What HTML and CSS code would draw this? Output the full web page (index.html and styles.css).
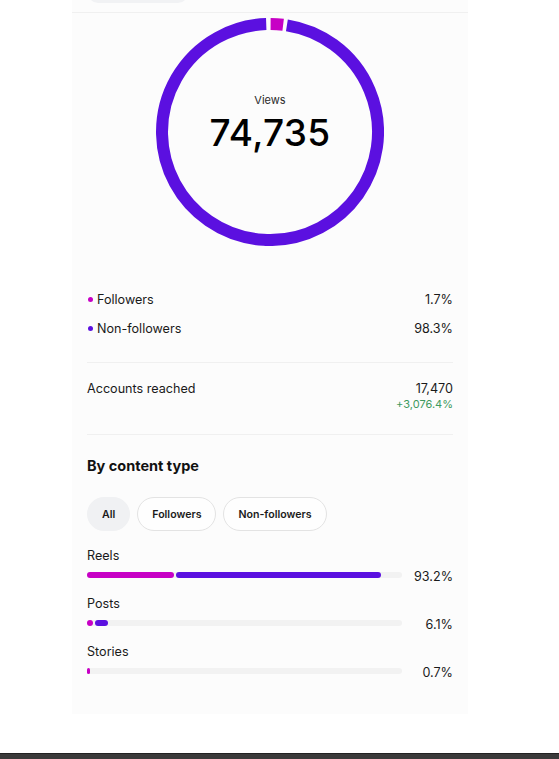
FILE: index.html
```html
<!DOCTYPE html>
<html>
<head>
<meta charset="utf-8">
<link rel="stylesheet" href="styles.css">
</head>
<body>
<div class="page">
  <main class="panel">
    <div class="top"><div class="tab-pill"></div></div>

    <div class="donut">
      <svg class="ring" width="228" height="228" viewBox="0 0 228 228">
        <path d="M130.89 7.33 A108 108 0 1 1 110.23 6.07" fill="none" stroke="#5b10e0" stroke-width="12"/>
        <path d="M114.6 6 A108 108 0 0 1 127.16 6.8" fill="none" stroke="#c700c5" stroke-width="12"/>
      </svg>
      <div class="donut-text">
        <div class="donut-label">Views</div>
        <div class="donut-value">74,735</div>
      </div>
    </div>

    <div class="legend">
      <div class="row"><span class="key"><span class="dot dot-f"></span>Followers</span><span>1.7%</span></div>
      <div class="row"><span class="key"><span class="dot dot-n"></span>Non-followers</span><span>98.3%</span></div>
    </div>

    <div class="divider"></div>

    <div class="reached">
      <span>Accounts reached</span>
      <div class="reached-val">
        <div>17,470</div>
        <div class="delta">+3,076.4%</div>
      </div>
    </div>

    <div class="divider divider-2"></div>

    <h2 class="heading">By content type</h2>

    <div class="chips">
      <span class="chip chip-active">All</span>
      <span class="chip">Followers</span>
      <span class="chip">Non-followers</span>
    </div>

    <div class="types">
      <div class="type">
        <div class="type-label">Reels</div>
        <div class="bar-row">
          <div class="track">
            <span class="seg seg-f" style="width:87px"></span>
            <span class="seg seg-n" style="width:205px"></span>
          </div>
          <span class="pct">93.2%</span>
        </div>
      </div>
      <div class="type">
        <div class="type-label">Posts</div>
        <div class="bar-row">
          <div class="track">
            <span class="seg seg-f" style="width:6px"></span>
            <span class="seg seg-n" style="width:13px"></span>
          </div>
          <span class="pct">6.1%</span>
        </div>
      </div>
      <div class="type">
        <div class="type-label">Stories</div>
        <div class="bar-row">
          <div class="track">
            <span class="seg seg-f" style="width:3px"></span>
          </div>
          <span class="pct">0.7%</span>
        </div>
      </div>
    </div>
  </main>
  <div class="bottom-bar"></div>
</div>
</body>
</html>
```

FILE: styles.css
```css
* { box-sizing: border-box; }
html, body { margin: 0; padding: 0; background: #ffffff; }
body {
  font-family: Inter, "Noto Sans", "Liberation Sans", sans-serif;
  color: #111;
  width: 559px;
  height: 759px;
  overflow: hidden;
}
.page { display: flex; flex-direction: column; height: 759px; }

.panel {
  margin-left: 72px;
  width: 396px;
  height: 714px;
  background: #fcfcfc;
  padding: 0 15px 0 15px;
  display: flex;
  flex-direction: column;
}

.top {
  height: 13px;
  margin: 0 -15px;
  border-bottom: 1px solid #f0f0f0;
  padding-left: 16px;
}
.tab-pill {
  width: 100px;
  height: 20px;
  margin-top: -17px;
  border-radius: 10px;
  background: #f1f2f4;
}

.donut {
  margin-top: 5px;
  display: grid;
  justify-content: center;
  justify-items: center;
}
.ring, .donut-text { grid-area: 1 / 1; }
.donut-text {
  padding-top: 75px;
  text-align: center;
}
.donut-label {
  font-size: 11px;
  line-height: 14px;
  color: #2a2a2a;
}
.donut-value {
  margin-top: 4px;
  font-size: 37px;
  line-height: 44px;
  font-weight: 500;
  color: #000;
  letter-spacing: 0.3px;
}

.legend { margin-top: 39px; }
.row {
  display: flex;
  justify-content: space-between;
  align-items: center;
  height: 29px;
  font-size: 12.6px;
  color: #1a1a1a;
}
.key { display: flex; align-items: center; }
.dot {
  width: 5px;
  height: 5px;
  border-radius: 50%;
  margin: 0 4px 0 1px;
}
.dot-f { background: #c700c5; }
.dot-n { background: #5b10e0; }

.divider {
  height: 1px;
  background: #f0f0f0;
  margin-top: 19px;
}
.divider-2 { margin-top: 24px; }

.reached {
  display: flex;
  justify-content: space-between;
  margin-top: 17px;
  font-size: 12.6px;
  line-height: 18px;
  color: #1a1a1a;
}
.reached-val { text-align: right; }
.delta {
  font-size: 11px;
  line-height: 12px;
  color: #3e9a5e;
}

.heading {
  margin: 21px 0 0;
  font-size: 14.5px;
  line-height: 20px;
  font-weight: 700;
  color: #111;
}

.chips {
  display: flex;
  gap: 7px;
  margin-top: 21px;
}
.chip {
  height: 34px;
  border-radius: 17px;
  border: 1px solid #e3e3e3;
  background: #fefefe;
  padding: 0 14px;
  display: flex;
  align-items: center;
  font-size: 10.6px;
  font-weight: 600;
  color: #1a1a1a;
}
.chip-active {
  border-color: #f0f1f3;
  background: #f0f1f3;
}

.types {
  margin-top: 16px;
  display: flex;
  flex-direction: column;
  gap: 11px;
}
.type-label {
  font-size: 12.6px;
  line-height: 18px;
  color: #1a1a1a;
}
.bar-row {
  margin-top: 1px;
  height: 18px;
  display: flex;
  align-items: center;
  justify-content: space-between;
}
.track {
  width: 315px;
  height: 6px;
  border-radius: 3px;
  background: #f2f2f2;
  display: flex;
  gap: 2px;
}
.seg {
  height: 6px;
  border-radius: 3px;
}
.seg-f { background: #c700c5; }
.seg-n { background: #5b10e0; }
.pct {
  font-size: 12.6px;
  padding-top: 2px;
  color: #1a1a1a;
}

.bottom-bar {
  margin-top: 39px;
  height: 6px;
  background: #3a3a3a;
  border-top: 1px solid #222;
}
```
